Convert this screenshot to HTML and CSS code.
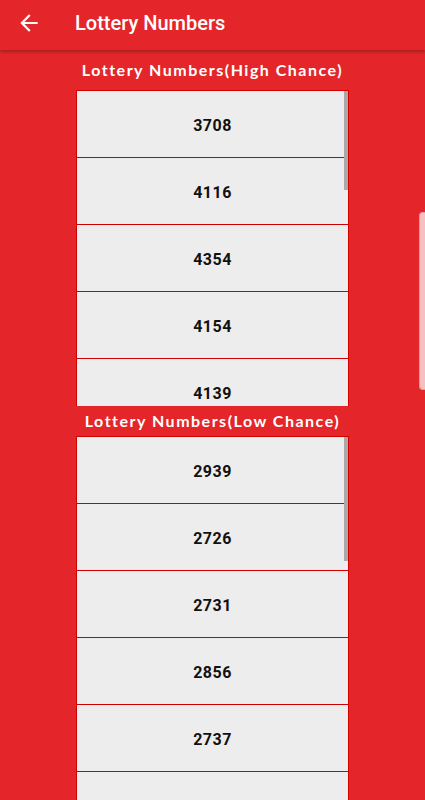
FILE: index.html
```html
<!DOCTYPE html>
<html lang="en">
<head>
  <meta charset="UTF-8">
  <meta name="viewport" content="width=device-width, initial-scale=1.0">
  <title>Lottery Numbers</title>
  <link rel="stylesheet" href="styles.css">
</head>
<body>

  <div class="appbar">
    <svg class="back" width="26" height="26" viewBox="0 0 24 24">
      <path d="M20 11H7.83l5.59-5.59L12 4l-8 8 8 8 1.41-1.41L7.83 13H20v-2z" fill="#fff"/>
    </svg>
    <h1 class="appbar-title">Lottery Numbers</h1>
  </div>

  <div class="page">
    <h2 class="section-title first">Lottery Numbers(High Chance)</h2>
    <div class="list high">
      <div class="item">3708</div>
      <div class="item">4116</div>
      <div class="item">4354</div>
      <div class="item">4154</div>
      <div class="item">4139</div>
      <div class="thumb" style="height: 99px"></div>
    </div>

    <h2 class="section-title">Lottery Numbers(Low Chance)</h2>
    <div class="list low">
      <div class="item">2939</div>
      <div class="item">2726</div>
      <div class="item">2731</div>
      <div class="item">2856</div>
      <div class="item">2737</div>
      <div class="item"></div>
      <div class="thumb" style="height: 124px"></div>
    </div>

    <div class="page-thumb"></div>
  </div>

</body>
</html>
```

FILE: styles.css
```css
html, body {
  height: 100%;
}
body {
  margin: 0;
  background-color: #e4262a;
  font-family: Roboto, "Liberation Sans", sans-serif;
  overflow: hidden;
}
.appbar {
  height: 50px;
  display: flex;
  align-items: center;
  background-color: #e4262a;
  box-shadow: 0 2px 3px rgba(0, 0, 0, 0.25);
  position: relative;
  z-index: 2;
}
.back {
  margin-left: 16px;
  margin-right: 33px;
  margin-top: -4px;
}
.appbar-title {
  margin: 0;
  color: #fff;
  font-size: 20px;
  font-weight: 500;
  margin-top: -4px;
}
.page {
  position: relative;
}
.section-title {
  margin: 0;
  height: 30px;
  line-height: 30px;
  text-align: center;
  color: #fff;
  font-family: Lato, sans-serif;
  font-size: 16px;
  font-weight: 700;
  letter-spacing: 1.5px;
}
.section-title.first {
  margin-top: 5px;
  margin-bottom: 5px;
}
.list {
  position: relative;
  width: 271px;
  margin: 0 auto;
  border: 1px solid #d40000;
  border-bottom: none;
  background-color: #ededed;
  overflow: hidden;
}
.list.high {
  height: 315px;
}
.list.low {
  height: 400px;
}
.item {
  height: 67px;
  padding-top: 3px;
  box-sizing: border-box;
  border-bottom: 1px solid #cc0000;
  display: flex;
  align-items: center;
  justify-content: center;
  font-size: 16px;
  font-weight: 700;
  color: #111;
  letter-spacing: 0.5px;
}
.thumb {
  position: absolute;
  top: 0;
  right: 0;
  width: 4px;
  background-color: #a9a9a9;
}
.page-thumb {
  position: absolute;
  top: 157px;
  right: 0;
  width: 5px;
  height: 176px;
  border-radius: 4px 0 0 4px;
  background-color: #f6bfc0;
  border: 1px solid #d9a0a0;
  border-right: none;
}
```
